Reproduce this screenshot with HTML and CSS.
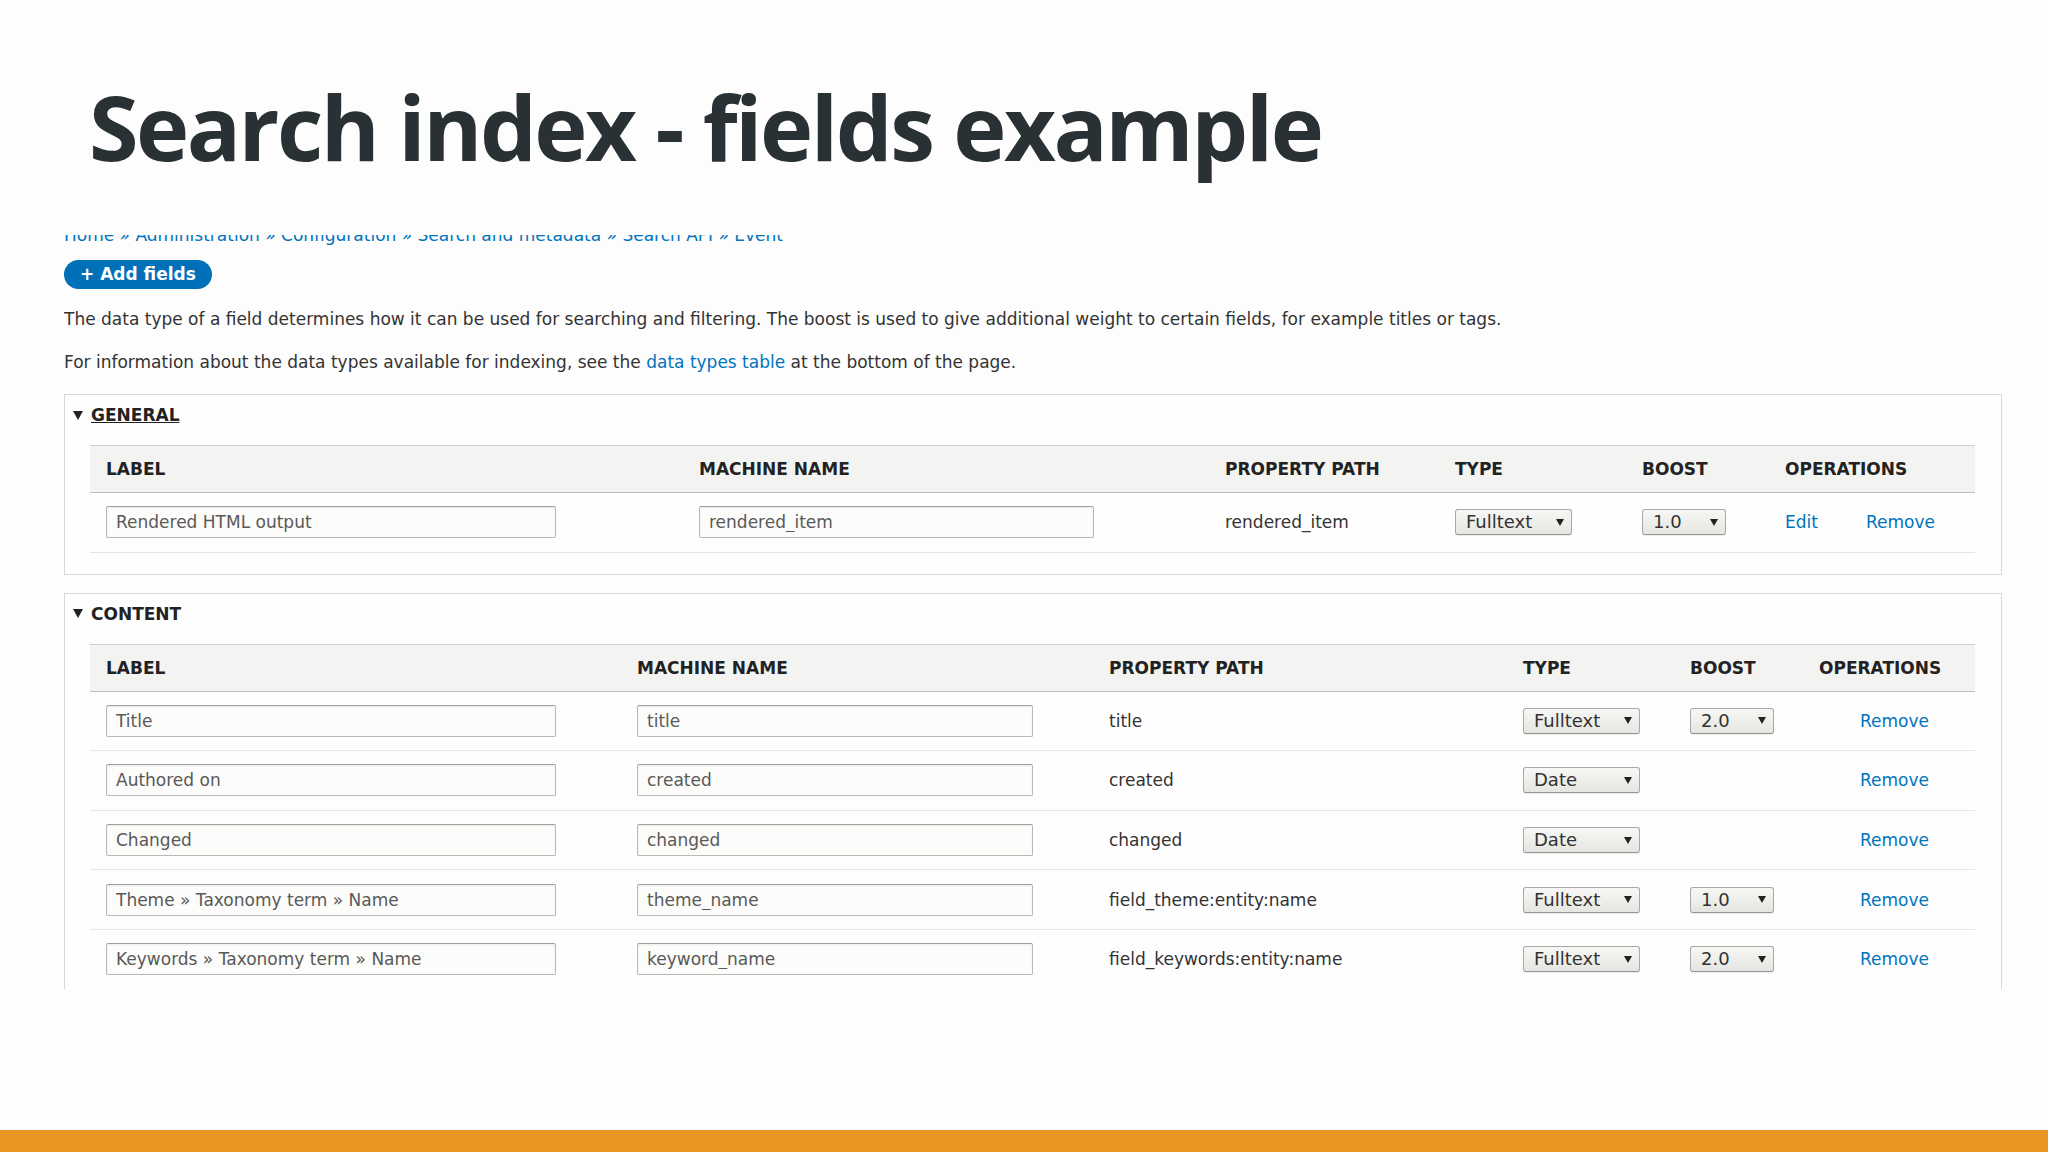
FILE: index.html
```html
<!DOCTYPE html>
<html lang="en">

<head>
    <meta charset="UTF-8">
    <meta name="viewport" content="width=device-width, initial-scale=1.0">
    <title>Search index - fields example</title>
    <link rel="stylesheet" href="styles.css">
</head>

<body>
    <div class="slide">
        <h1 class="slide-title">Search index - fields example</h1>

        <div class="shot">
            <div class="breadcrumb">
                <a href="#">Home</a> » <a href="#">Administration</a> » <a href="#">Configuration</a> » <a href="#">Search and metadata</a> » <a href="#">Search API</a> » <a href="#">Event</a>
            </div>

            <a href="#" class="button-add">+ Add fields</a>

            <p class="first">The data type of a field determines how it can be used for searching and filtering. The boost is used to give additional weight to certain fields, for example titles or tags.</p>
            <p>For information about the data types available for indexing, see the <a href="#">data types table</a> at the bottom of the page.</p>

            <!-- General -->
            <div class="fieldset">
                <div class="legend"><span class="arrow"></span><a href="#" class="legend-link">General</a></div>
                <table class="fields fields-general">
                    <colgroup>
                        <col class="c-label">
                        <col class="c-machine">
                        <col class="c-path">
                        <col class="c-type">
                        <col class="c-boost">
                        <col class="c-ops">
                    </colgroup>
                    <thead>
                        <tr>
                            <th>Label</th>
                            <th>Machine name</th>
                            <th>Property path</th>
                            <th>Type</th>
                            <th>Boost</th>
                            <th>Operations</th>
                        </tr>
                    </thead>
                    <tbody>
                        <tr>
                            <td><input type="text" class="input-label" value="Rendered HTML output"></td>
                            <td><input type="text" class="input-machine" value="rendered_item"></td>
                            <td>rendered_item</td>
                            <td><span class="select select-type">Fulltext</span></td>
                            <td><span class="select select-boost">1.0</span></td>
                            <td><a href="#">Edit</a><a href="#" class="remove">Remove</a></td>
                        </tr>
                    </tbody>
                </table>
            </div>

            <!-- Content -->
            <div class="fieldset">
                <div class="legend"><span class="arrow"></span><span class="legend-text">Content</span></div>
                <table class="fields fields-content">
                    <colgroup>
                        <col class="c-label">
                        <col class="c-machine">
                        <col class="c-path">
                        <col class="c-type">
                        <col class="c-boost">
                        <col class="c-ops">
                    </colgroup>
                    <thead>
                        <tr>
                            <th>Label</th>
                            <th>Machine name</th>
                            <th>Property path</th>
                            <th>Type</th>
                            <th>Boost</th>
                            <th>Operations</th>
                        </tr>
                    </thead>
                    <tbody>
                        <tr>
                            <td><input type="text" class="input-label" value="Title"></td>
                            <td><input type="text" class="input-machine" value="title"></td>
                            <td>title</td>
                            <td><span class="select select-type">Fulltext</span></td>
                            <td><span class="select select-boost">2.0</span></td>
                            <td class="ops"><a href="#">Remove</a></td>
                        </tr>
                        <tr>
                            <td><input type="text" class="input-label" value="Authored on"></td>
                            <td><input type="text" class="input-machine" value="created"></td>
                            <td>created</td>
                            <td><span class="select select-type">Date</span></td>
                            <td></td>
                            <td class="ops"><a href="#">Remove</a></td>
                        </tr>
                        <tr>
                            <td><input type="text" class="input-label" value="Changed"></td>
                            <td><input type="text" class="input-machine" value="changed"></td>
                            <td>changed</td>
                            <td><span class="select select-type">Date</span></td>
                            <td></td>
                            <td class="ops"><a href="#">Remove</a></td>
                        </tr>
                        <tr>
                            <td><input type="text" class="input-label" value="Theme » Taxonomy term » Name"></td>
                            <td><input type="text" class="input-machine" value="theme_name"></td>
                            <td>field_theme:entity:name</td>
                            <td><span class="select select-type">Fulltext</span></td>
                            <td><span class="select select-boost">1.0</span></td>
                            <td class="ops"><a href="#">Remove</a></td>
                        </tr>
                        <tr>
                            <td><input type="text" class="input-label" value="Keywords » Taxonomy term » Name"></td>
                            <td><input type="text" class="input-machine" value="keyword_name"></td>
                            <td>field_keywords:entity:name</td>
                            <td><span class="select select-type">Fulltext</span></td>
                            <td><span class="select select-boost">2.0</span></td>
                            <td class="ops"><a href="#">Remove</a></td>
                        </tr>
                    </tbody>
                </table>
            </div>
        </div>
    </div>

    <div class="footer-bar"></div>
</body>
</html>
```

FILE: styles.css
```css
body {
    display: flex;
    flex-direction: column;
    height: 100vh;
    margin: 0;
    padding: 0;
    background-color: #fdfdfd;
    font-family: "DejaVu Sans", "Noto Sans", sans-serif;
    font-size: 17px;
    color: #333;
}

a {
    color: #0074bd;
    text-decoration: none;
}

.slide {
    flex: 1;
    overflow: hidden;
}

.slide-title {
    margin: 76px 0 0 89px;
    font-family: "Open Sans", "Noto Sans", sans-serif;
    font-weight: 700;
    font-size: 90px;
    line-height: 100px;
    letter-spacing: -2.5px;
    color: #2a3135;
}

/* screenshot of the admin page, cut off at top and bottom */
.shot {
    width: 1938px;
    height: 754px;
    margin: 59px 0 0 64px;
    overflow: hidden;
    line-height: 20px;
}

.breadcrumb {
    margin-top: -10px;
    color: #0074bd;
    white-space: nowrap;
}

.button-add {
    display: inline-block;
    margin-top: 15px;
    padding: 4px 16px 5px;
    border-radius: 20px;
    background-color: #0071b8;
    color: #fff;
    font-weight: bold;
}

.shot p {
    margin: 0 0 22px;
}

.shot p.first {
    margin: 20px 0 23px;
}

.fieldset {
    padding: 10px 26px 21px 25px;
    margin-bottom: 18px;
    border: 1px solid #d8d8d6;
    background-color: #fefefe;
}

.legend {
    display: flex;
    align-items: center;
    margin-left: -17px;
    margin-bottom: 20px;
    font-weight: bold;
    text-transform: uppercase;
    color: #222;
}

.legend .arrow {
    width: 0;
    height: 0;
    margin-right: 8px;
    border-left: 5px solid transparent;
    border-right: 5px solid transparent;
    border-top: 9px solid #222;
}

.legend-link {
    color: #222;
    text-decoration: underline;
}

/* tables */
.fields {
    width: 100%;
    table-layout: fixed;
    border-collapse: separate;
    border-spacing: 0;
}

.fields th {
    height: 46px;
    padding: 0 0 0 16px;
    border-top: 1px solid #cfcfcc;
    border-bottom: 1px solid #bebebb;
    background-color: #f3f3f1;
    text-align: left;
    text-transform: uppercase;
    font-weight: bold;
    color: #222;
}

.fields td {
    height: 58.6px;
    padding: 0 0 0 16px;
    border-bottom: 1px solid #e6e5e1;
    vertical-align: middle;
    white-space: nowrap;
}

.fields-general .c-label { width: 593px; }
.fields-general .c-machine { width: 526px; }
.fields-general .c-path { width: 230px; }
.fields-general .c-type { width: 187px; }
.fields-general .c-boost { width: 143px; }

.fields-content .c-label { width: 531px; }
.fields-content .c-machine { width: 472px; }
.fields-content .c-path { width: 414px; }
.fields-content .c-type { width: 167px; }
.fields-content .c-boost { width: 129px; }

.fields input {
    display: block;
    box-sizing: border-box;
    height: 32px;
    padding: 0 9px;
    border: 1px solid #b8b8b5;
    border-top-color: #a0a09d;
    border-radius: 2px;
    background-color: #fcfcfa;
    box-shadow: inset 0 1px 2px rgba(0, 0, 0, 0.08);
    font-family: "DejaVu Sans", "Noto Sans", sans-serif;
    font-size: 17px;
    color: #595959;
}

.fields .input-label {
    width: 450px;
}

.fields-general .input-machine {
    width: 395px;
}

.fields-content .input-machine {
    width: 396px;
}

.select {
    display: inline-flex;
    align-items: center;
    justify-content: space-between;
    box-sizing: border-box;
    height: 26px;
    padding: 0 7px 0 10px;
    border: 1px solid #a8a8a5;
    border-bottom-color: #959592;
    border-radius: 3px;
    background: linear-gradient(#f7f7f5, #e5e5e1);
    box-shadow: 0 1px 1px rgba(0, 0, 0, 0.08);
    font-size: 18px;
    color: #333;
    vertical-align: middle;
}

.select::after {
    content: "";
    width: 0;
    height: 0;
    border-left: 4px solid transparent;
    border-right: 4px solid transparent;
    border-top: 7px solid #222;
}

.select-type {
    width: 117px;
}

.select-boost {
    width: 84px;
}

.fields .remove {
    margin-left: 48px;
}

.fields td.ops {
    padding-left: 57px;
}

.footer-bar {
    height: 22px;
    background-color: #e99623;
}
```
